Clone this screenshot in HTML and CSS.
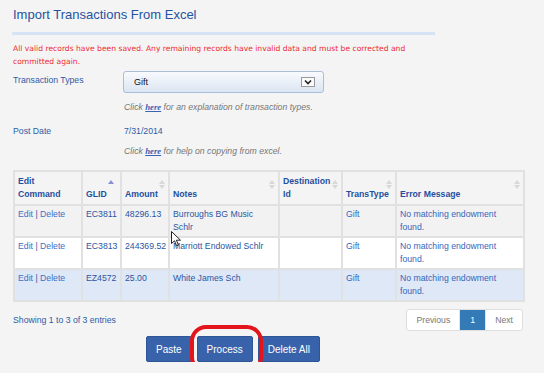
FILE: index.html
```html
<!DOCTYPE html>
<html>
<head>
    <meta charset="UTF-8">
    <title>Import Transactions From Excel</title>
    <link rel="stylesheet" href="styles.css">
</head>
<body>
    <div class="page">
        <h1 class="page-title">Import Transactions From Excel</h1>
        <div class="title-bar"></div>

        <p class="status-msg">All valid records have been saved. Any remaining records have invalid data and must be corrected and committed again.</p>

        <div class="form-row first">
            <label class="form-label">Transaction Types</label>
            <div class="select-box">
                <span>Gift</span>
                <span class="select-arrow">
                    <svg width="8" height="6" viewBox="0 0 8 6"><path d="M1 1.5 L4 4.5 L7 1.5" fill="none" stroke="#222" stroke-width="1.6"/></svg>
                </span>
            </div>
        </div>
        <p class="hint first-hint">Click <a href="#">here</a> for an explanation of transaction types.</p>

        <div class="form-row second">
            <label class="form-label">Post Date</label>
            <div class="form-value">7/31/2014</div>
        </div>
        <p class="hint second-hint">Click <a href="#">here</a> for help on copying from excel.</p>

        <div class="table-wrap">
            <table class="grid">
                <colgroup>
                    <col style="width:68px">
                    <col style="width:39px">
                    <col style="width:48px">
                    <col style="width:110px">
                    <col style="width:63px">
                    <col style="width:54px">
                    <col style="width:128px">
                </colgroup>
                <thead>
                    <tr>
                        <th>Edit<br>Command</th>
                        <th>GLID<span class="sort-asc"></span></th>
                        <th>Amount<span class="sort-both"></span></th>
                        <th>Notes<span class="sort-both"></span></th>
                        <th>Destination<br>Id<span class="sort-both"></span></th>
                        <th>TransType<span class="sort-both"></span></th>
                        <th>Error Message<span class="sort-both"></span></th>
                    </tr>
                </thead>
                <tbody>
                    <tr class="odd">
                        <td><a href="#">Edit</a> | <a href="#">Delete</a></td>
                        <td>EC3811</td>
                        <td>48296.13</td>
                        <td class="notes">Burroughs BG Music Schlr</td>
                        <td></td>
                        <td class="light">Gift</td>
                        <td class="light">No matching endowment found.</td>
                    </tr>
                    <tr class="even">
                        <td><a href="#">Edit</a> | <a href="#">Delete</a></td>
                        <td>EC3813</td>
                        <td>244369.52</td>
                        <td class="notes">Marriott Endowed Schlr</td>
                        <td></td>
                        <td class="light">Gift</td>
                        <td class="light">No matching endowment found.</td>
                    </tr>
                    <tr class="selected">
                        <td><a href="#">Edit</a> | <a href="#">Delete</a></td>
                        <td>EZ4572</td>
                        <td>25.00</td>
                        <td class="notes">White James Sch</td>
                        <td></td>
                        <td class="light">Gift</td>
                        <td class="light">No matching endowment found.</td>
                    </tr>
                </tbody>
            </table>
            <svg class="cursor" width="11" height="16" viewBox="0 0 11 16">
                <path d="M0.5 0.5 L0.5 12.5 L3.5 9.8 L5.6 14.8 L7.4 14 L5.4 9.2 L9.5 9.2 Z" fill="#fff" stroke="#222" stroke-width="1"/>
            </svg>
        </div>

        <div class="table-footer">
            <div class="info">Showing 1 to 3 of 3 entries</div>
            <div class="pager">
                <a href="#" class="pager-btn">Previous</a>
                <a href="#" class="pager-btn active">1</a>
                <a href="#" class="pager-btn">Next</a>
            </div>
        </div>

        <div class="actions">
            <button>Paste</button>
            <button>Process</button>
            <button>Delete All</button>
            <span class="highlight"></span>
        </div>
    </div>
</body>
</html>
```

FILE: styles.css
```css
body {
    margin: 0;
    background: #f4f4f4;
    font-family: "Liberation Sans", Arial, sans-serif;
    font-size: 8.7px;
    color: #2d5ca6;
}
.page {
    padding: 0 13px;
}
.page-title {
    margin: 7px 0 0 0;
    font-size: 13px;
    line-height: 16px;
    font-weight: normal;
    color: #2553a0;
}
.title-bar {
    margin: 9px 0 0 -1px;
    width: 423px;
    height: 3px;
    background: #d6e3f4;
}
.status-msg {
    margin: 7px 0 0 0;
    width: 406px;
    font-family: "DejaVu Sans", Verdana, sans-serif;
    font-size: 7.6px;
    line-height: 13px;
    color: #ee2a33;
}
.form-row {
    display: grid;
    grid-template-columns: 111px 200px;
    align-items: start;
}
.form-row.first {
    margin-top: 3px;
}
.form-row.second {
    margin-top: 11px;
}
.form-label {
    line-height: 13px;
    padding-top: 2.5px;
    color: #2d5ca6;
}
.form-row.second .form-label {
    padding-top: 0;
}
.form-value {
    line-height: 13px;
    color: #2d5ca6;
}
.select-box {
    box-sizing: border-box;
    height: 22px;
    display: flex;
    align-items: center;
    justify-content: space-between;
    padding: 0 8px 0 10px;
    border: 1px solid #aabdd9;
    border-radius: 3px;
    background: linear-gradient(#f8fafd, #dbe5f3);
    color: #111;
    font-size: 9px;
    margin-left: -1px;
}
.select-arrow {
    box-sizing: border-box;
    width: 14px;
    height: 10px;
    border: 1px solid #9a9a9a;
    background: #fafafa;
    display: flex;
    align-items: center;
    justify-content: center;
}
.hint {
    margin: 0 0 0 111px;
    line-height: 13px;
    font-style: italic;
    color: #777;
}
.hint a {
    font-family: "Liberation Serif", "Times New Roman", serif;
    font-weight: bold;
    color: #3b63b3;
    text-decoration: underline;
}
.first-hint {
    margin-top: 8px;
}
.second-hint {
    margin-top: 7px;
}
.table-wrap {
    position: relative;
    margin-top: 12px;
    width: 510px;
}
.grid {
    width: 510px;
    table-layout: fixed;
    border-collapse: collapse;
    border: 2px solid #e1e1e1;
}
.grid th,
.grid td {
    border: 2px solid #e1e1e1;
    text-align: left;
    line-height: 13px;
    padding: 0 2px 0 3px;
}
.grid th {
    position: relative;
    height: 29px;
    vertical-align: bottom;
    padding-bottom: 3px;
    font-weight: bold;
    color: #1f4f9f;
    background: #f4f4f4;
}
.grid td {
    height: 28px;
    vertical-align: top;
    padding-top: 2px;
    color: #2a56a2;
}
.grid td.notes {
    padding-right: 8px;
}
.grid td.light {
    color: #3467bb;
}
.grid td a {
    color: #3c70c6;
    text-decoration: none;
}
.grid tr.odd td {
    background: #f2f2f2;
}
.grid tr.even td {
    background: #fff;
}
.grid tr.selected td {
    background: #dfe8f6;
}
.sort-asc,
.sort-both {
    position: absolute;
    right: 6px;
    top: 8px;
    width: 0;
    height: 0;
}
.sort-asc {
    border-left: 3px solid transparent;
    border-right: 3px solid transparent;
    border-bottom: 4px solid #8a8fd6;
}
.sort-both::before,
.sort-both::after {
    content: "";
    position: absolute;
    left: -3px;
    border-left: 3px solid transparent;
    border-right: 3px solid transparent;
}
.sort-both::before {
    top: 0;
    border-bottom: 4px solid #d8d8d8;
}
.sort-both::after {
    top: 5px;
    border-top: 4px solid #d8d8d8;
}
.cursor {
    position: absolute;
    left: 158px;
    top: 61px;
}
.table-footer {
    width: 510px;
    margin-top: 7px;
    display: flex;
    justify-content: space-between;
    align-items: center;
}
.info {
    color: #2d5ca6;
}
.pager {
    display: flex;
    height: 22px;
    border: 1px solid #ddd;
    border-radius: 3px;
    background: #fff;
    overflow: hidden;
    box-sizing: border-box;
}
.pager-btn {
    display: flex;
    align-items: center;
    padding: 0 9px;
    color: #777;
    text-decoration: none;
    border-left: 1px solid #e4e4e4;
}
.pager-btn:first-child {
    border-left: none;
}
.pager-btn.active {
    background: #337ab7;
    color: #fff;
    padding: 0 10px;
}
.actions {
    position: relative;
    display: flex;
    gap: 5px;
    margin-top: 5px;
    padding-left: 133px;
}
.actions button {
    height: 26px;
    padding: 0 9px;
    border: 1px solid #2e5596;
    border-radius: 2px;
    background: #3863aa;
    color: #fff;
    font-family: "Liberation Sans", Arial, sans-serif;
    font-size: 10px;
}
.highlight {
    position: absolute;
    left: 177px;
    top: -11px;
    width: 73px;
    height: 48px;
    box-sizing: border-box;
    border: 4px solid #e3141b;
    border-radius: 16px;
}
```
